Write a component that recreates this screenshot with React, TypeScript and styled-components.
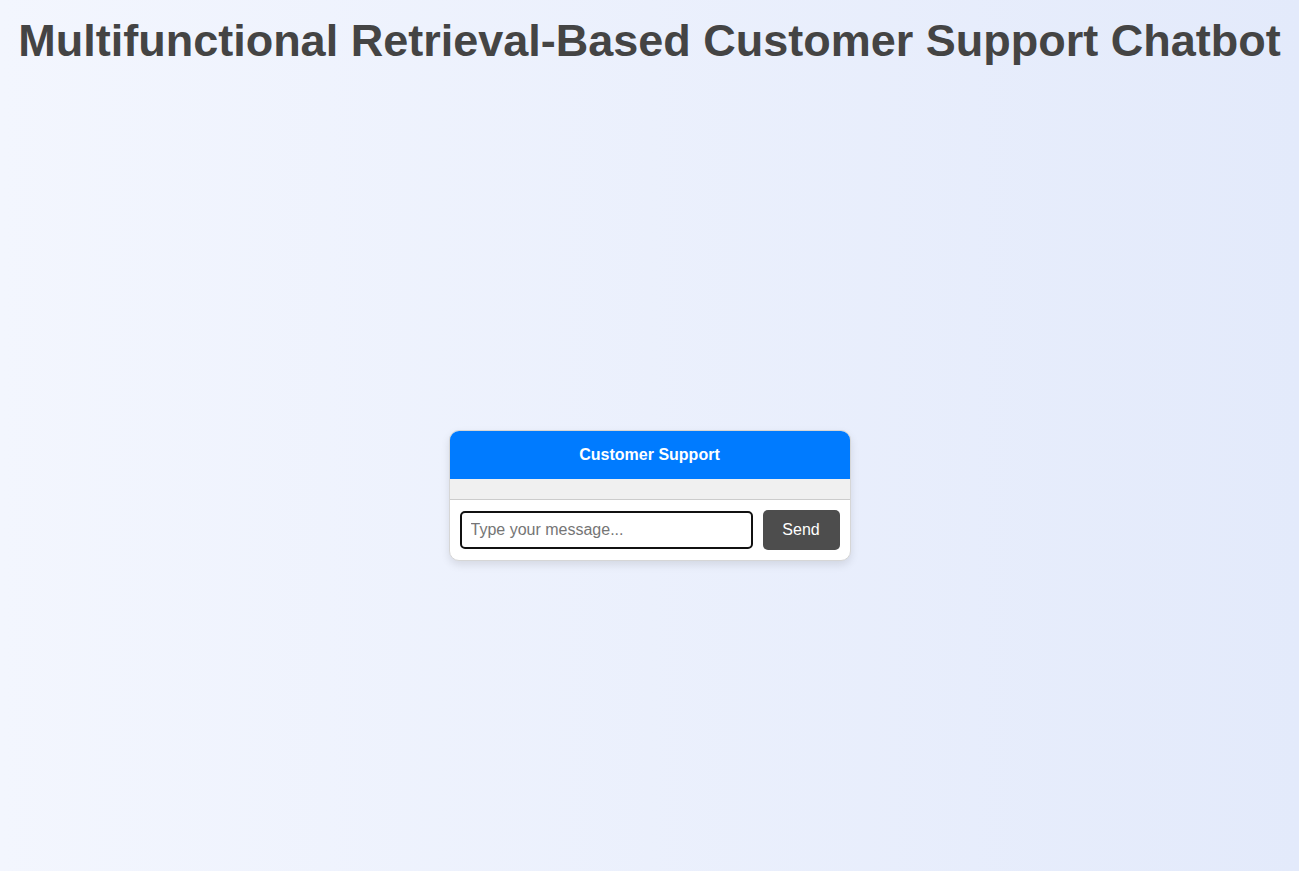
import React from "react";
import styled, { createGlobalStyle } from "styled-components";

const GlobalStyle = createGlobalStyle`
  html, body {
    margin: 0;
    padding: 0;
  }
  body {
    font-family: "Liberation Sans", Arial, sans-serif;
    background: linear-gradient(to right, #f3f6fe, #e3eafb);
    min-height: 100vh;
  }
`;

const Page = styled.div`
  display: flex;
  flex-direction: column;
  min-height: 100vh;
`;

const Title = styled.h1`
  margin: 15px 0 0;
  font-size: 45px;
  line-height: 52px;
  font-weight: 700;
  color: #444;
  text-align: center;
  white-space: nowrap;
`;

const Main = styled.main`
  flex: 1;
  display: flex;
  align-items: center;
  justify-content: center;
  padding-top: 52px;
`;

const Card = styled.div`
  width: 400px;
  background: #fff;
  border: 1px solid #d6d6d6;
  border-radius: 10px;
  overflow: hidden;
  box-shadow: 0 4px 8px rgba(0, 0, 0, 0.1);
`;

const Header = styled.div`
  background: #007bff;
  color: #fff;
  font-weight: 700;
  font-size: 16px;
  text-align: center;
  padding: 15px;
  line-height: 18px;
`;

const Messages = styled.div`
  background: #f0f0f0;
  padding: 10px;
  border-bottom: 1px solid #ccc;
`;

const InputRow = styled.form`
  display: flex;
  align-items: center;
  gap: 10px;
  padding: 10px;
  margin: 0;
`;

const TextInput = styled.input`
  flex: 1;
  min-width: 0;
  height: 38px;
  box-sizing: border-box;
  padding: 8px 9px;
  font-family: "Liberation Sans", Arial, sans-serif;
  font-size: 16px;
  color: #222;
  border: 2px solid #111;
  border-radius: 5px;
  outline: none;
  background: #fff;
  &::placeholder {
    color: #757575;
  }
`;

const SendButton = styled.button`
  height: 40px;
  width: 77px;
  padding: 0;
  border: none;
  border-radius: 5px;
  background: #4d4d4d;
  color: #fff;
  font-family: "Liberation Sans", Arial, sans-serif;
  font-size: 16px;
  cursor: pointer;
`;

export default function App() {
  return (
    <>
      <GlobalStyle />
      <Page>
        <Title>Multifunctional Retrieval-Based Customer Support Chatbot</Title>
        <Main>
          <Card>
            <Header>Customer Support</Header>
            <Messages />
            <InputRow onSubmit={(e) => e.preventDefault()}>
              <TextInput type="text" placeholder="Type your message..." autoFocus />
              <SendButton type="submit">Send</SendButton>
            </InputRow>
          </Card>
        </Main>
      </Page>
    </>
  );
}
